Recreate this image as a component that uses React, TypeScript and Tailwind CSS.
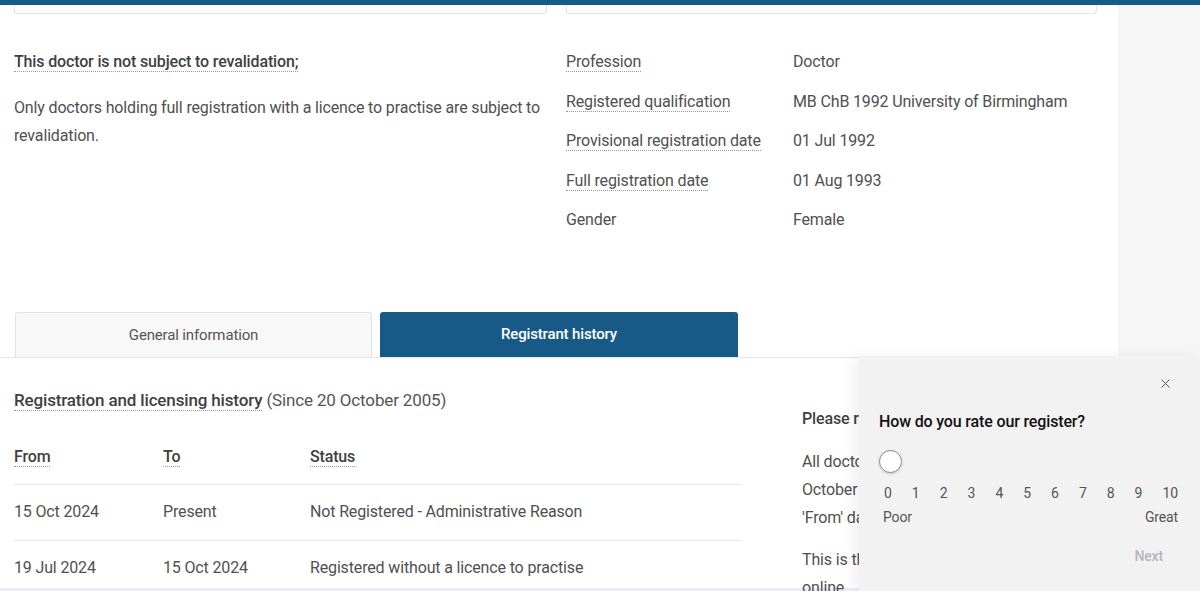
import { X } from 'lucide-react'

const FONT = { fontFamily: 'Roboto, "Liberation Sans", sans-serif', letterSpacing: '-0.15px' }

const DETAILS: { label: string; value: string; dotted: boolean }[] = [
  { label: 'Profession', value: 'Doctor', dotted: true },
  { label: 'Registered qualification', value: 'MB ChB 1992 University of Birmingham', dotted: true },
  { label: 'Provisional registration date', value: '01 Jul 1992', dotted: true },
  { label: 'Full registration date', value: '01 Aug 1993', dotted: true },
  { label: 'Gender', value: 'Female', dotted: false },
]

const HISTORY = [
  { from: '15 Oct 2024', to: 'Present', status: 'Not Registered - Administrative Reason' },
  { from: '19 Jul 2024', to: '15 Oct 2024', status: 'Registered without a licence to practise' },
]

function Dotted({ children, className = '' }: { children: React.ReactNode; className?: string }) {
  return (
    <span className={`border-b border-dotted border-[#9a9a9a] ${className}`}>{children}</span>
  )
}

function FeedbackPanel() {
  return (
    <div className="absolute right-0 top-[356px] h-[235px] w-[341px] bg-[#f2f2f3] shadow-[-6px_0_14px_rgba(0,0,0,0.06)]">
      <button type="button" className="absolute right-[27px] top-[20px] text-[#555]">
        <X size={15} strokeWidth={1.6} />
      </button>
      <div className="px-5 pt-[54px]">
        <h3 className="text-[16px] font-medium leading-6 text-[#111]">How do you rate our register?</h3>
        <div className="mt-[16px] h-[23px] w-[23px] rounded-full border border-[#8a8a8a] bg-white shadow-[0_1px_3px_rgba(0,0,0,0.15)]" />
        <div className="mt-[10px] flex justify-between pl-[5px] pr-[2px] text-[14px] leading-5 text-[#555]">
          {Array.from({ length: 11 }, (_, i) => (
            <span key={i}>{i}</span>
          ))}
        </div>
        <div className="mt-[4px] flex justify-between pl-[4px] pr-[2px] text-[14px] leading-5 text-[#555]">
          <span>Poor</span>
          <span>Great</span>
        </div>
        <div className="mt-[19px] flex justify-end pr-[17px]">
          <span className="text-[14px] font-medium text-[#b3b6bb]">Next</span>
        </div>
      </div>
    </div>
  )
}

export default function App() {
  return (
    <div className="relative h-[591px] w-[1200px] overflow-hidden bg-[#f6f6f6]" style={FONT}>
      <div className="h-[5px] w-full bg-[#175a88]" />
      <div className="h-[583px] w-[1118px] bg-white">
        {/* bottoms of the cards above */}
        <div className="flex gap-[19px] px-[14px]">
          <div className="h-[9px] w-[533px] rounded-b-[4px] border-x border-b border-[#e3e3e3]" />
          <div className="h-[9px] w-[531px] rounded-b-[4px] border-x border-b border-[#e3e3e3]" />
        </div>

        <div className="mt-[36px] flex gap-[19px] px-[14px] text-[16px] leading-6 text-[#505050]">
          <div className="w-[533px]">
            <p className="font-medium text-[#3f3f3f]">
              <Dotted>This doctor is not subject to revalidation;</Dotted>
            </p>
            <p className="mt-[20px] leading-[28px]">
              Only doctors holding full registration with a licence to practise are subject to revalidation.
            </p>
          </div>
          <dl className="grid w-[531px] grid-cols-[227px_1fr] gap-y-[15.5px]">
            {DETAILS.map((d) => (
              <div key={d.label} className="contents">
                <dt>{d.dotted ? <Dotted>{d.label}</Dotted> : d.label}</dt>
                <dd>{d.value}</dd>
              </div>
            ))}
          </dl>
        </div>

        {/* tabs */}
        <div className="mt-[80px] flex gap-[8px] border-b border-[#e6e6e6] pl-[15px]">
          <button
            type="button"
            className="h-[45px] w-[357px] rounded-t-[3px] border border-b-0 border-[#e3e3e3] bg-[#f8f8f8] text-[15px] text-[#555]"
          >
            General information
          </button>
          <button
            type="button"
            className="h-[45px] w-[358px] rounded-t-[3px] bg-[#175a88] text-[15px] font-medium text-white"
          >
            Registrant history
          </button>
        </div>

        <div className="mt-[30px] flex px-[14px] text-[#505050]">
          <div className="w-[726px]">
            <h2 className="text-[17px] leading-6 text-[#3f3f3f]">
              <Dotted className="font-medium">Registration and licensing history</Dotted>{' '}
              <span className="text-[#555]">(Since 20 October 2005)</span>
            </h2>
            <table className="mt-[18px] w-full text-left text-[16px]">
              <thead>
                <tr className="border-b border-[#e6e6e6]">
                  <th className="h-[54px] w-[149px] font-medium text-[#3f3f3f]">
                    <Dotted>From</Dotted>
                  </th>
                  <th className="w-[147px] font-medium text-[#3f3f3f]">
                    <Dotted>To</Dotted>
                  </th>
                  <th className="font-medium text-[#3f3f3f]">
                    <Dotted>Status</Dotted>
                  </th>
                </tr>
              </thead>
              <tbody>
                {HISTORY.map((r) => (
                  <tr key={r.from} className="border-b border-[#e6e6e6]">
                    <td className="h-[56px]">{r.from}</td>
                    <td>{r.to}</td>
                    <td>{r.status}</td>
                  </tr>
                ))}
              </tbody>
            </table>
          </div>
          <div className="ml-[62px] w-[295px] pt-[17px] text-[16px] leading-[28px]">
            <p className="font-medium text-[#3f3f3f]">Please read</p>
            <p className="mt-[15px]">
              All doctors registered since 20
              <br />
              October 2005 are shown with a
              <br />
              'From' date for each entry.
            </p>
            <p className="mt-[14px]">
              This is the registration history held
              <br />
              online.
            </p>
          </div>
        </div>
      </div>
      <div className="h-[3px] w-full bg-[#ececf3]" />
      <FeedbackPanel />
    </div>
  )
}
